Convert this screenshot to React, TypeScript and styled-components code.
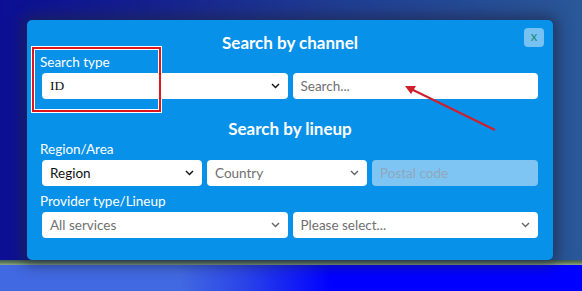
import React from 'react'
import styled, { createGlobalStyle } from 'styled-components';

const GlobalStyle = createGlobalStyle`
  html, body {
    margin: 0;
    padding: 0;
    width: 582px;
    height: 291px;
    overflow: hidden;
  }
  body {
    font-family: "Lato", "Noto Sans", sans-serif;
  }
`;

const Page = styled.div`
  position: relative;
  width: 582px;
  height: 291px;
  display: flex;
  flex-direction: column;
`;

const Scene = styled.div`
  height: 260px;
  box-sizing: border-box;
  padding: 20px 0 0 27px;
  background: linear-gradient(to right, #0c0f93 0%, #15208f 25%, #1f3b92 55%, #2a5898 100%);
`;

const Ground = styled.div`
  flex: 1;
  display: flex;
  flex-direction: column;
`;

const Edge = styled.div`
  height: 5px;
  background: linear-gradient(to bottom, #3c5a52 0%, #5e7c58 50%, #8ea784 100%);
`;

const Floor = styled.div`
  flex: 1;
  background: linear-gradient(to right, #4169e1 0%, #4169e1 31%, #2a44e8 42%, #0000ff 57%, #0000ff 100%);
`;

const Modal = styled.div`
  position: relative;
  width: 526px;
  height: 240px;
  box-sizing: border-box;
  padding: 13px 15px 0 15px;
  background: #0891e9;
  border-radius: 5px;
  box-shadow: 0 0 14px 5px rgba(30, 38, 72, 0.65);
  color: #ffffff;
`;

const Close = styled.button`
  position: absolute;
  top: 8px;
  right: 9px;
  width: 20px;
  height: 19px;
  padding: 0 0 2px 0;
  border: none;
  border-radius: 4px;
  background: rgba(255, 255, 255, 0.45);
  color: #178a78;
  font-family: "Lato", sans-serif;
  font-size: 13px;
  line-height: 17px;
`;

const Heading = styled.h2`
  margin: 0;
  text-align: center;
  font-size: 17px;
  font-weight: 700;
  line-height: 20px;
`;

const Label = styled.div`
  font-size: 13.5px;
  line-height: 16px;
  height: 16px;
  margin: 0 0 3px -2px;
`;

const Row = styled.div<{ $cols: string }>`
  display: grid;
  grid-template-columns: ${p => p.$cols};
  gap: 5px;
`;

const Field = styled.div<{ $disabled?: boolean }>`
  position: relative;
  height: 26px;
  border-radius: 4px;
  background: ${p => (p.$disabled ? '#7fc5f3' : '#ffffff')};
  display: flex;
  align-items: center;
  padding: 0 8px;
  box-sizing: border-box;
`;

const FieldText = styled.span<{ $tone: 'dark' | 'muted' | 'faint' | 'serif' }>`
  flex: 1;
  font-size: 13.5px;
  font-family: ${p => (p.$tone === 'serif' ? '"Liberation Serif", serif' : '"Lato", sans-serif')};
  color: ${p =>
    p.$tone === 'dark' || p.$tone === 'serif' ? '#111111' : p.$tone === 'faint' ? '#8fa7b8' : '#707070'};
  white-space: nowrap;
`;

const Chevron = styled.svg<{ $dark?: boolean }>`
  width: 9px;
  height: 6px;
  flex: none;
  stroke: ${p => (p.$dark ? '#111111' : '#666666')};
`;

const Section = styled.div<{ $top: number }>`
  margin-top: ${p => p.$top}px;
`;

const Highlight = styled.div`
  position: absolute;
  left: 32px;
  top: 47px;
  width: 129px;
  height: 65px;
  border: 2px solid #e0161e;
  box-sizing: border-box;
  box-shadow: 0 0 0 1px #ffffff, inset 0 0 0 1px #ffffff;
`;

const Pointer = styled.svg`
  position: absolute;
  left: 400px;
  top: 80px;
  width: 100px;
  height: 55px;
`;

function Select(props: { text: string; tone: 'dark' | 'muted' | 'serif' }) {
  const dark = props.tone !== 'muted';
  return (
    <Field>
      <FieldText $tone={props.tone}>{props.text}</FieldText>
      <Chevron $dark={dark} viewBox="0 0 9 6" fill="none" strokeWidth="1.4">
        <path d="M1 1 L4.5 4.6 L8 1" />
      </Chevron>
    </Field>
  );
}

function Input(props: { text: string; disabled?: boolean }) {
  return (
    <Field $disabled={props.disabled}>
      <FieldText $tone={props.disabled ? 'faint' : 'muted'}>{props.text}</FieldText>
    </Field>
  );
}

export default function App() {
  return (
    <>
      <GlobalStyle />
      <Page>
        <Scene>
          <Modal>
            <Close>x</Close>
            <Heading>Search by channel</Heading>
            <Section $top={1}>
              <Label>Search type</Label>
              <Row $cols="1fr 1fr">
                <Select text="ID" tone="serif" />
                <Input text="Search..." />
              </Row>
            </Section>
            <Section $top={20}>
              <Heading>Search by lineup</Heading>
            </Section>
            <Section $top={2}>
              <Label>Region/Area</Label>
              <Row $cols="160px 160px 1fr">
                <Select text="Region" tone="dark" />
                <Select text="Country" tone="muted" />
                <Input text="Postal code" disabled />
              </Row>
            </Section>
            <Section $top={7}>
              <Label>Provider type/Lineup</Label>
              <Row $cols="1fr 1fr">
                <Select text="All services" tone="muted" />
                <Select text="Please select..." tone="muted" />
              </Row>
            </Section>
          </Modal>
        </Scene>
        <Ground>
          <Edge />
          <Floor />
        </Ground>
        <Highlight />
        <Pointer viewBox="0 0 100 55">
          <line x1="95" y1="50" x2="9" y2="8" stroke="#d01f2a" strokeWidth="2" />
          <path d="M5 6 L16 6 L11 14 Z" fill="#d01f2a" />
        </Pointer>
      </Page>
    </>
  );
}
